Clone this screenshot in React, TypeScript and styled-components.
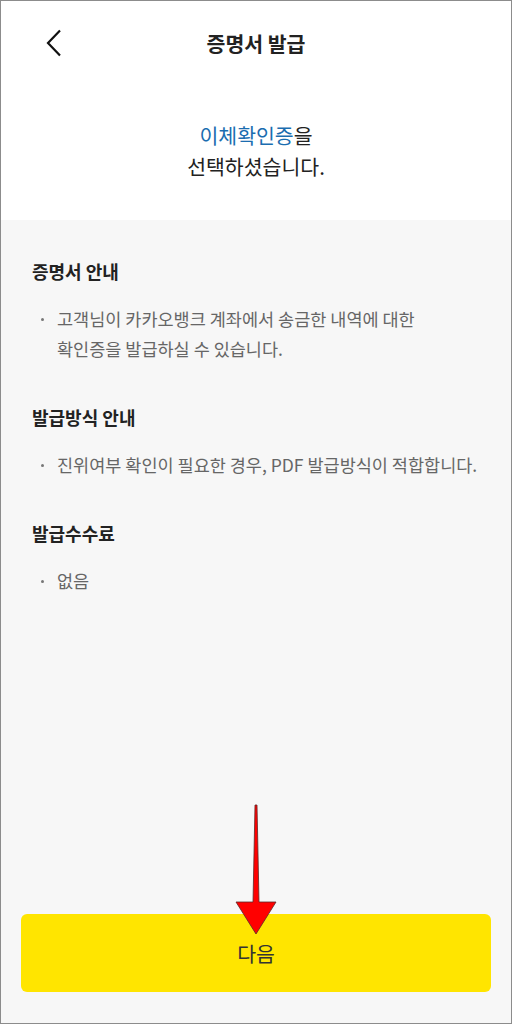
import styled, { createGlobalStyle } from 'styled-components'

const GlobalStyle = createGlobalStyle`
  html, body {
    margin: 0;
    padding: 0;
    background: #ffffff;
  }
  body {
    font-family: 'Noto Sans CJK KR', 'Noto Sans', sans-serif;
  }
`

const Screen = styled.div`
  position: relative;
  width: 512px;
  height: 1024px;
  box-sizing: border-box;
  border: 1px solid #8c8c8c;
  background: #f7f7f7;
  display: flex;
  flex-direction: column;
`

const Top = styled.section`
  height: 219px;
  background: #ffffff;
  display: flex;
  flex-direction: column;
`

const Header = styled.header`
  height: 84px;
  display: grid;
  grid-template-columns: 1fr auto 1fr;
  align-items: center;
  padding-left: 44px;
`

const BackButton = styled.button`
  justify-self: start;
  border: 0;
  background: none;
  padding: 0;
  width: 18px;
  height: 28px;
  display: flex;
`

const Title = styled.h1`
  margin: 0 0 0 -44px;
  font-size: 20.5px;
  font-weight: 700;
  color: #222222;
`

const Lead = styled.p`
  margin: 35px 0 0;
  text-align: center;
  font-size: 20.5px;
  line-height: 31px;
  color: #222222;
`

const Accent = styled.span`
  color: #1b6db0;
`

const Content = styled.main`
  flex: 1;
  padding: 38px 31px 0 31px;
`

const Heading = styled.h2<{ $first?: boolean }>`
  margin: ${(p) => (p.$first ? '0' : '40px')} 0 0;
  font-size: 18px;
  line-height: 26px;
  font-weight: 700;
  color: #222222;
`

const List = styled.ul`
  list-style: none;
  margin: 20px 0 0;
  padding: 0;
`

const Item = styled.li`
  display: flex;
  font-size: 17.5px;
  line-height: 30px;
  color: #666666;
`

const Bullet = styled.span`
  position: relative;
  flex-shrink: 0;
  width: 25px;

  &::before {
    content: '';
    position: absolute;
    left: 9px;
    top: 14px;
    width: 3px;
    height: 3px;
    border-radius: 50%;
    background: #777777;
  }
`

const Footer = styled.footer`
  padding: 0 20px 31px;
`

const NextButton = styled.button`
  width: 100%;
  height: 78px;
  border: 0;
  border-radius: 6px;
  background: #ffe500;
  font-family: inherit;
  font-size: 20.5px;
  color: #333333;
  padding: 0;
`

const Pointer = styled.svg`
  position: absolute;
  left: 234px;
  top: 802px;
  pointer-events: none;
`

const sections = [
  {
    title: '증명서 안내',
    lines: ['고객님이 카카오뱅크 계좌에서 송금한 내역에 대한\n확인증을 발급하실 수 있습니다.'],
  },
  {
    title: '발급방식 안내',
    lines: ['진위여부 확인이 필요한 경우, PDF 발급방식이 적합합니다.'],
  },
  {
    title: '발급수수료',
    lines: ['없음'],
  },
]

export default function App() {
  return (
    <>
      <GlobalStyle />
      <Screen>
        <Top>
          <Header>
            <BackButton aria-label="뒤로">
              <svg width="18" height="28" viewBox="0 0 18 28">
                <path
                  d="M15 1.5 L3 14 L15 26.5"
                  fill="none"
                  stroke="#111"
                  strokeWidth="2.2"
                />
              </svg>
            </BackButton>
            <Title>증명서 발급</Title>
          </Header>
          <Lead>
            <Accent>이체확인증</Accent>을
            <br />
            선택하셨습니다.
          </Lead>
        </Top>

        <Content>
          {sections.map((s, i) => (
            <div key={s.title}>
              <Heading $first={i === 0}>{s.title}</Heading>
              <List>
                {s.lines.map((line) => (
                  <Item key={line}>
                    <Bullet />
                    <span style={{ whiteSpace: 'pre-line' }}>{line}</span>
                  </Item>
                ))}
              </List>
            </div>
          ))}
        </Content>

        <Footer>
          <NextButton>다음</NextButton>
        </Footer>

        <Pointer width="42" height="133" viewBox="0 0 42 133">
          <polygon
            points="20,2 22,2 24,99 41,99 21,131 1,99 18,99"
            fill="#ff0000"
            stroke="#5a2a2a"
            strokeWidth="0.8"
          />
        </Pointer>
      </Screen>
    </>
  )
}
